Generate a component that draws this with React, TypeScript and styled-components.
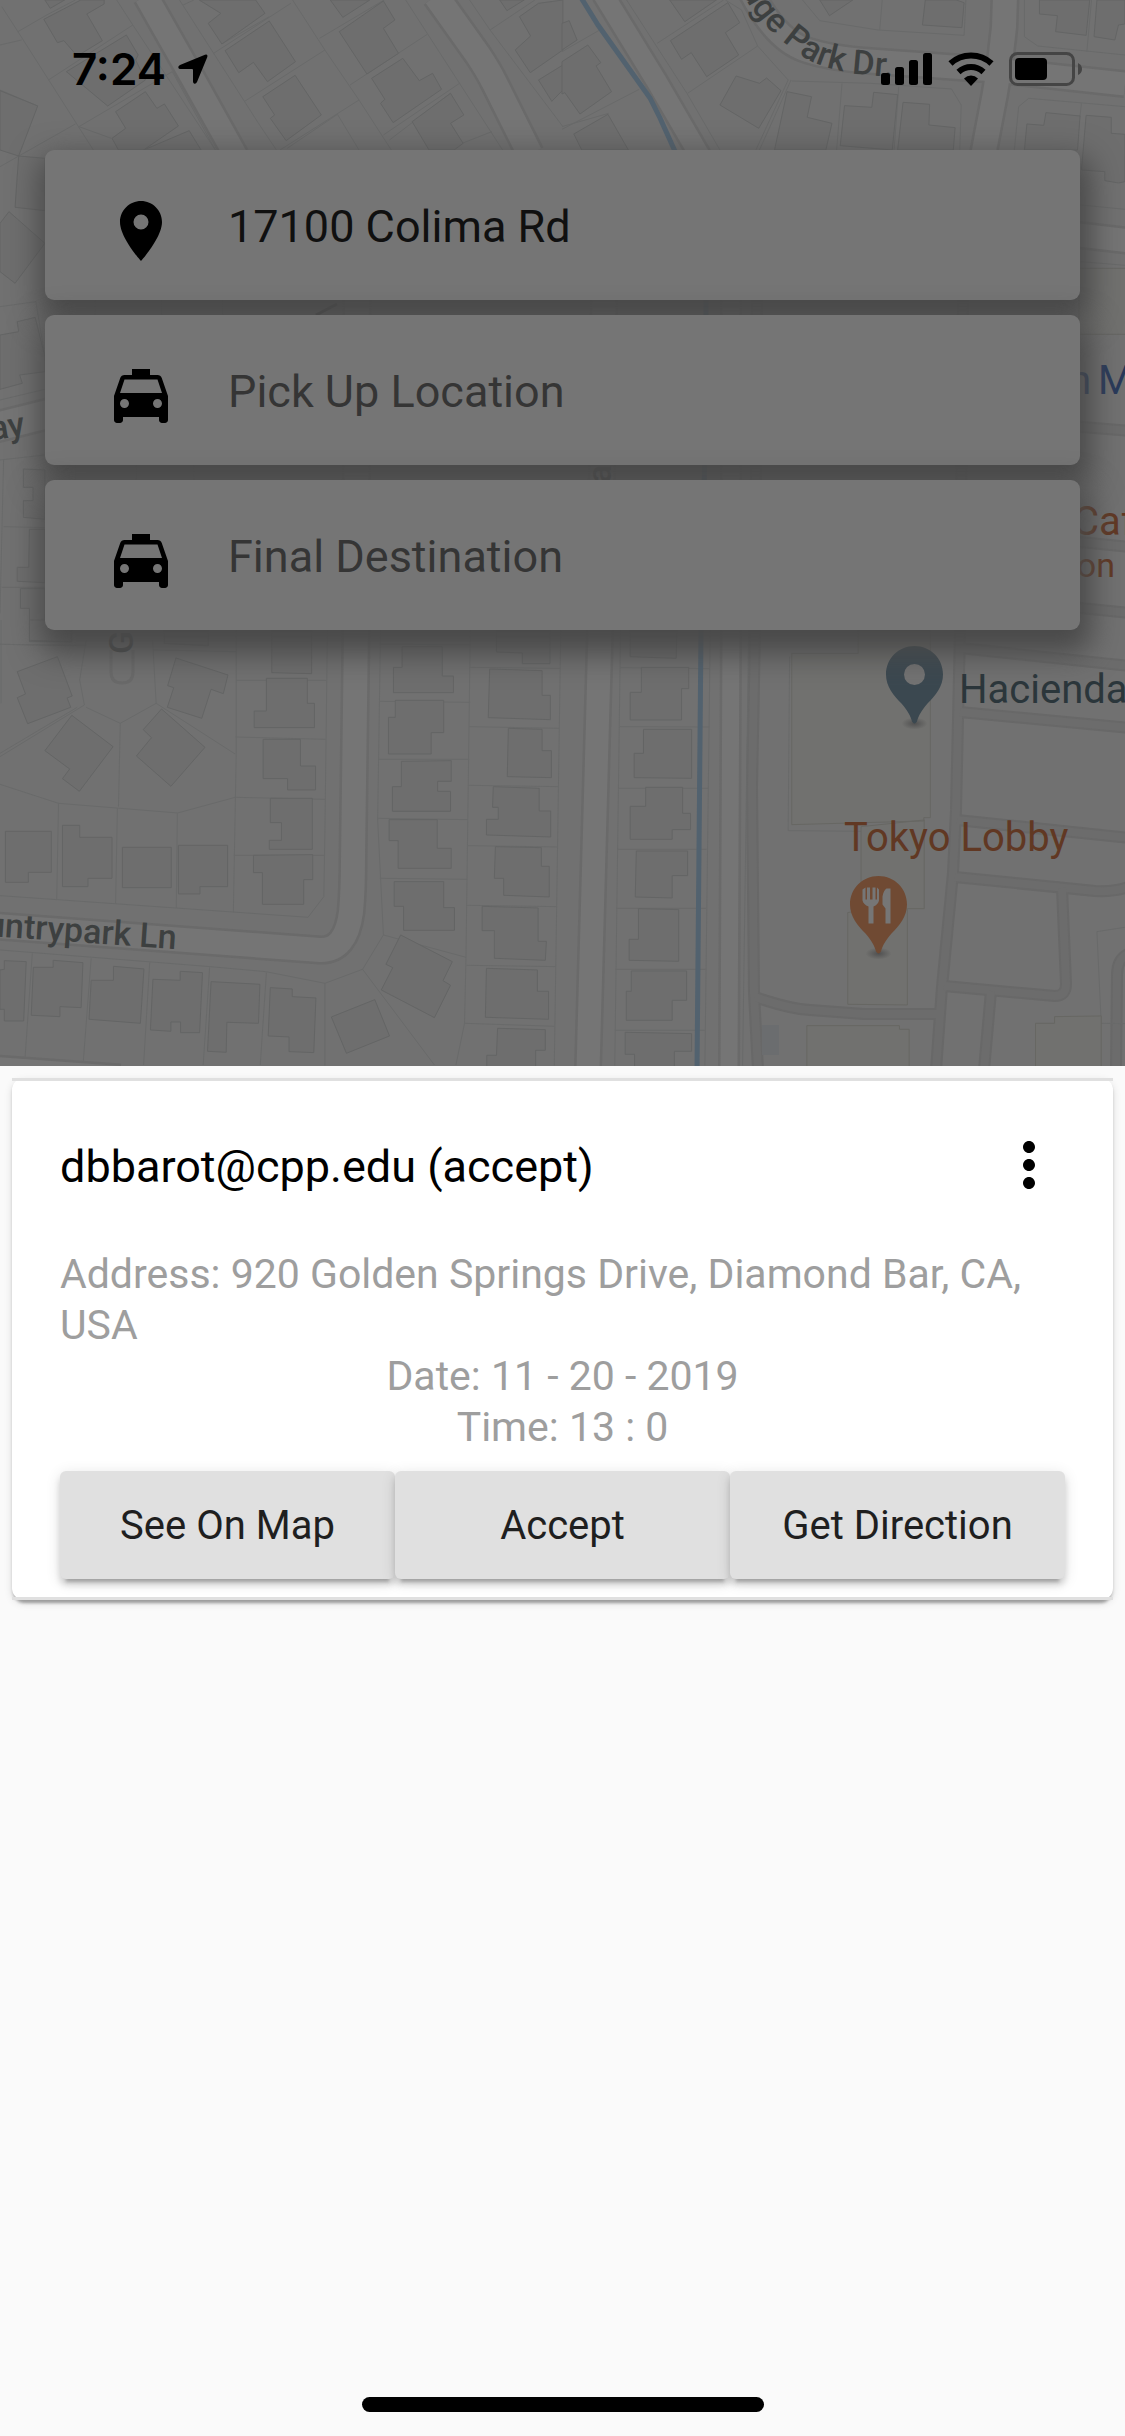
import React from 'react';
import styled, { createGlobalStyle } from 'styled-components';
import { MdLocalTaxi, MdMoreVert, MdPlace } from 'react-icons/md';
import type { IconType } from 'react-icons';

const font = 'Roboto, Inter, "Liberation Sans", sans-serif';
const clockFont = 'Inter, Roboto, "Liberation Sans", sans-serif';

const GlobalStyle = createGlobalStyle`
  *, *::before, *::after { box-sizing: border-box; }
  body { margin: 0; background: #fafafa; font-family: ${font}; }
`;

const Page = styled.div`
  min-height: 100vh;
  display: flex;
  flex-direction: column;
  background: #fafafa;
`;

const MapHeader = styled.header`
  position: relative;
  height: 1066px;
  overflow: hidden;
  background: #717171;
`;

const MapSvg = styled.svg`
  position: absolute;
  inset: 0;
  width: 100%;
  height: 100%;
`;

const HeaderContent = styled.div`
  position: relative;
  display: flex;
  flex-direction: column;
`;

const StatusBar = styled.div`
  height: 138px;
  padding: 0 43px 0 72px;
  display: flex;
  align-items: center;
  justify-content: space-between;
  color: #000;
`;

const StatusGroup = styled.div<{ $gap: number }>`
  display: flex;
  align-items: center;
  gap: ${(p) => p.$gap}px;
`;

const Clock = styled.time`
  font-family: ${clockFont};
  font-size: 44px;
  line-height: 54px;
  font-weight: 600;
`;

const FieldStack = styled.form`
  display: flex;
  flex-direction: column;
  gap: 15px;
  padding: 12px 45px 0;
`;

const Field = styled.label`
  position: relative;
  height: 150px;
  display: flex;
  align-items: center;
  gap: 51px;
  padding: 0 60px;
  border-radius: 9px;
  background: #757575;
  box-shadow: 3px 15px 30px 9px #494949;
`;

const FieldIcon = styled.span`
  display: flex;
  padding-top: 12px;
  font-size: 72px;
  color: #000;
`;

const FieldInput = styled.input`
  flex: 1;
  min-width: 0;
  padding: 4px 0 0;
  border: 0;
  outline: 0;
  background: transparent;
  font-family: ${font};
  font-size: 45px;
  line-height: 60px;
  color: #101010;
  &::placeholder { color: #353535; opacity: 1; }
`;

const RequestList = styled.main`
  padding: 12px;
`;

const Card = styled.article`
  border-radius: 12px;
  background: #fff;
  box-shadow: 0 6px 3px -3px rgba(0, 0, 0, 0.2), 0 3px 3px rgba(0, 0, 0, 0.14), 0 3px 9px rgba(0, 0, 0, 0.12);
`;

const CardBody = styled.div`
  border: solid #e0e0e0;
  border-width: 3px 0;
  padding: 48px 48px 18px;
`;

const CardHead = styled.div`
  display: flex;
  align-items: center;
  justify-content: space-between;
  height: 72px;
`;

const CardTitle = styled.h2`
  margin: 0;
  padding-top: 4px;
  font-size: 45px;
  line-height: 60px;
  font-weight: 400;
  color: #000;
`;

const MenuButton = styled.button`
  display: flex;
  padding: 0;
  border: 0;
  background: transparent;
  font-size: 72px;
  color: #000;
`;

const Details = styled.div`
  display: flex;
  flex-direction: column;
  align-items: center;
  padding: 48px 0 18px;
`;

const DetailLine = styled.p`
  margin: 0;
  font-size: 41px;
  line-height: 51px;
  color: #9e9e9e;
`;

const Actions = styled.div`
  display: grid;
  grid-template-columns: repeat(3, 1fr);
`;

const ActionButton = styled.button`
  height: 108px;
  padding: 0;
  border: 0;
  border-radius: 6px;
  background: #e0e0e0;
  box-shadow: 0 9px 3px -6px rgba(0, 0, 0, 0.2), 0 6px 6px rgba(0, 0, 0, 0.14), 0 3px 15px rgba(0, 0, 0, 0.12);
  font-family: ${font};
  font-size: 40px;
  line-height: 51px;
  color: #1f1f1f;
`;

const HomeArea = styled.footer`
  margin-top: auto;
  padding-bottom: 24px;
  display: flex;
  justify-content: center;
`;

const HomeIndicator = styled.div`
  width: 402px;
  height: 15px;
  border-radius: 8px;
  background: #000;
`;

/* ---------- map ---------- */

type Line = string;

const cityRoads: { d: Line; w: number }[] = [
  { d: 'M146 -4 L192 77 L236 156', w: 25 },
  { d: 'M436 -4 L478 55 Q488 70 494 82 L530 154', w: 27 },
  { d: 'M603 -6 L657 82 L700 156', w: 22 },
  { d: 'M750 -10 Q775 40 806 50 Q830 58 870 61 L995 70 L1125 84', w: 25 },
  { d: 'M1005 -4 L1004 27 Q1001 60 995 93 L983 156', w: 26 },
  { d: 'M1070 234 L1130 241', w: 25 },
  { d: 'M-4 427 L60 411', w: 30 },
  { d: 'M-4 926 L320 950 Q346 951 351 912 Q353 890 353 860 L356 630 L357 300', w: 26 },
  { d: 'M604 300 L600 630 L588 1070', w: 25 },
  { d: 'M731 300 L731 630 L729 1070', w: 19 },
  { d: 'M-4 1070 L120 1079', w: 28 },
];

const driveways: Line[] = [
  'M757 300 L755 630 L752 787 L754 993 L758 1070',
  'M963 300 L960 630 L956 810 L953 873 L942 987 L936 1070',
  'M1070 426 L1130 431',
  'M1070 541 L1130 547',
  'M1070 607 L1130 613',
  'M960 648 L1130 666',
  'M960 712 L1130 728',
  'M957 820 L1130 838',
  'M955 877 L1095 891 Q1118 892 1130 886',
  'M1062 888 L1066 984 Q1066 996 1055 996 L944 986',
  'M991 991 L984 1070',
  'M755 997 Q790 1009 810 1010 L864 1014 L939 1014',
  'M1130 953 Q1117 958 1117 975 L1116 1070',
];

interface TileData { x: number; y: number; lots: Line; houses: Line; shops?: Line; }

/* Each tile keeps its own grid of 2.785 × 3 units to the pixel. */
const tiles: TileData[] = [
  {
    x: 0, y: 0,
    lots: 'M5 20L50 95L260 450 M50 95L130 45L210 0 M0 135L60 120 M325 0L370 75L600 450 M135 240L370 75 M220 380L480 215 M310 415L220 380 M0 270L105 318 M0 500L210 372 M480 215L600 450 M500 0L720 370L770 450 M510 15L540 0 M595 160L810 10 M620 130L750 50 M815 0L905 150L1000 300L1090 450 M680 305L905 150 M890 115L1070 0 M780 450L1000 300 M800 445L940 343L1000 450 M975 255L1190 103 M1130 0L1280 250L1400 450 M1068 405L1280 250 M1085 420L1255 280 M1308 0L1365 90L1568 380 M1365 90L1490 0 M1240 450L1370 395',
    houses: 'M125 0L140 25L180 0Z M290 0L290 12L242 42L285 122L215 168L178 122L160 128L122 58L225 0Z M185 215L352 105L385 165L378 180L405 240L300 318Z M312 415L350 385L322 335L405 275L437 325L458 312L497 378L400 450L330 450Z M400 450L527 392L560 450Z M555 0L615 40L580 70L618 132L738 40L712 0Z M627 152L750 63L823 185L745 245L706 187L665 218Z M732 290L822 226L895 345L797 422L753 355L765 345Z M920 0L955 52L1030 0Z M945 95L1068 3L1100 60L1068 85L1110 160L1022 222Z M1035 235L1122 175L1168 242L1205 220L1230 268L1095 368L1060 310L1072 298Z M1148 365L1255 280L1292 345L1255 370L1290 430L1265 450L1195 450Z M1392 0L1412 32L1460 0Z M1447 50L1500 10L1568 0L1568 150L1477 218L1435 150L1478 108Z M1500 240L1568 195L1568 270L1537 304Z M0 272L105 318L52 468L0 450Z M52 468L125 475L125 632L42 622Z M0 670L25 635L125 730L42 850L0 815Z',
  },
  {
    x: 562, y: 0,
    lots: 'M0 155L105 90 M0 388L215 268 M180 0L348 280L440 450 M265 130L450 0 M455 0L500 30L545 138L630 240L540 450 M350 280L545 138 M670 0L718 62L880 90L1120 106L1125 0 M885 90L892 0 M640 243L860 250L1085 267L1112 315L1108 450 M780 250L765 450 M938 260L925 450 M1288 0L1288 110L1325 138L1568 165 M1475 0L1462 155 M1260 450L1272 320L1300 295L1568 320 M1447 310L1432 450 M0 380L130 340 M638 240L550 450 M1445 615L1568 628 M1445 785L1568 796',
    houses: 'M0 70L20 62L42 120L0 150Z M0 185L72 135L108 188L95 198L138 275L50 342L8 278L0 282Z M33 402L128 343L185 450L55 450Z M300 0L342 65L430 0Z M302 122L462 8L495 68L455 98L492 165L403 230L360 158L333 178Z M440 315L485 228L550 250L570 234L610 272L548 385Z M592 450L627 275L695 290L683 352L752 370L735 450Z M718 0L745 47L810 0Z M1012 0L1004 75L1114 83L1120 8L1098 0Z M1330 0L1330 42L1380 47L1375 95L1460 106L1470 0Z M1490 0L1482 110L1540 120L1550 75L1568 72L1568 0Z M787 317L863 322L868 277L935 284L920 450L775 437Z M950 307L1024 313L1022 375L1095 383L1090 450L935 450Z M1295 372L1342 376L1348 338L1443 348L1436 450L1288 450Z M1460 346L1530 352L1530 400L1568 403L1568 545L1550 549L1512 542L1512 515L1447 510Z',
    shops: 'M1440 805H1572V1003H1440Z',
  },
  {
    x: 0, y: 300,
    lots: 'M0 20L100 5L125 170 M0 300L125 268 M0 480L125 465 M10 480L0 940 M10 680L125 683 M5 862L125 862 M0 1033L240 1038 M210 495V540 M380 495V540 M540 495V540 M620 0V45 M265 0V45 M450 0V45',
    houses: 'M48 65L98 52L125 170L125 215L55 225L62 250L0 268L0 105L52 95Z M65 507L125 510L125 658L65 652V602H92V562H65Z M82 688H125V848L48 844V802H80Z M57 866H125V990H200V1025H82V925H57Z M458 990H580V1038L458 1030Z',
  },
  {
    x: 0, y: 620,
    lots: 'M3 0V250 M0 73L240 76 M240 60L222 180L235 255L0 410 M240 262L335 310L435 250L655 402 M0 400L215 262 M335 310L330 560 M435 250L425 60 M427 90L658 95 M658 30V400L650 877 M0 493L163 550L495 579L655 532L905 538 M163 550L158 837 M327 565L322 850 M494 580L491 864 M658 181H908 M656 351L907 358 M651 706H903 M912 30L905 640L902 830L858 892L0 827 M0 990L585 1040L740 1055L905 1090L1010 1048L1210 1335 M90 1000L70 1310 M254 1015L232 1325 M417 1028L400 1335 M584 1042L566 1335 M742 1058L725 1335 M905 1090V1337 M1060 30L1052 600L1068 945L1010 1048 M1068 945L1298 1012 M1058 72L1310 75 M1058 244L1310 247 M1055 418H1307 M1052 595L1303 599 M1058 775L1302 778 M1310 30L1298 1012L1294 1210L1270 1335 M1308 142L1560 145 M1307 320L1557 325 M1306 496L1555 500 M1303 677L1552 681 M1300 856L1549 860 M1299 1036L1548 1040 M1294 1210L1544 1219 M1562 30L1544 1337',
    houses: 'M82 0H198V65L82 61Z M48 155L160 110L201 228L187 234L197 262L77 311L48 233L71 222Z M125 392L200 286L315 380L221 514L174 476L194 447Z M490 114L635 165L622 221L588 208L562 295L466 262L484 203L467 197Z M450 267L571 382L476 499L380 408L422 353L399 329Z M458 30H580V76L458 70Z M757 30H868V161L757 158Z M742 175H856V250H876V323H708V273H742Z M733 358H837V438H879V510H801V476H733Z M753 535H870V688H750V661H784V608H753Z M706 706L871 704V779H846V853H731V758H706Z M15 634H143V757H79V787H15Z M174 616H222V652H312V775H245V800H174Z M341 682H477V803H341Z M497 676H634V800H557V822H497Z M0 1050L12 1048V1022L73 1025L66 1203H12V1168H0Z M93 1042H148V1021L231 1028L226 1163L167 1160V1190L87 1186Z M254 1081H316V1039L401 1047L391 1210L248 1198Z M426 1078L502 1081V1054L564 1058L556 1238H503V1206H476V1234L419 1230Z M588 1085L724 1093L720 1210L632 1207L630 1297L578 1294Z M753 1103L814 1107V1130L880 1134L874 1298L805 1295V1251L747 1248Z M923 1191L1044 1139L1085 1248L965 1300Z M1116 945L1260 1025L1234 1082L1255 1096L1210 1193L1062 1110L1094 1043L1075 1033Z M1120 80H1232V168H1263V218H1096V142H1120Z M1101 241H1236V338H1201V402H1082V292H1101Z M1118 424L1257 422V484H1219V514H1255V574H1093V500H1118Z M1084 599H1218V685H1257V745H1109V662H1084Z M1098 785H1236V863H1266V931H1124V859H1098Z M1383 30H1532V131H1455V99L1383 96Z M1364 147L1510 152V226H1533V299L1360 293Z M1416 325L1510 328V392H1536V473L1413 470Z M1374 500L1502 505V573H1534V651L1355 645V598H1388V562H1372Z M1380 680L1508 683V739H1530V831L1403 826V775H1377Z M1343 859L1499 864V964H1522L1519 1021L1377 1015V932H1343Z M1355 1045L1497 1050V1114H1528V1198L1352 1192Z M1386 1225L1519 1229V1291H1492V1340H1356V1306H1383Z',
  },
  {
    x: 562, y: 620,
    lots: 'M163 30L147 1337 M413 30L398 1337 M163 143L412 146 M161 320L410 321 M158 505H407 M155 688H403 M152 865H401 M149 1048H399 M147 1231H398 M520 30L503 1337 M634 110L630 632L833 634 M1490 935L1568 922 M1490 935L1502 1210L1568 1211',
    houses: 'M190 30H320L318 115L190 110Z M221 142H353V206H333V300H190V217H221Z M227 328H361V475L201 473V400H227Z M233 502H336V580H358V629H307V658H190V559H233Z M207 693H350V767H307V834L204 831Z M213 866L325 869V1024L187 1021V958H213Z M193 1053H347V1141H307V1201H179V1114H193Z M176 1237L361 1241V1294H313V1340H202V1303H176Z',
    shops: 'M640 100H825V30H1026V593H1008V603L640 614Z M833 620L1009 600V866H962V1155L796 1153V878L833 870Z M682 1217H940V1228H967V1340H682Z M1319 1210H1372V1190L1502 1188V1340H1319Z',
  },
];

const Tile = ({ tile }: { tile: TileData }) => (
  <g transform={`translate(${tile.x} ${tile.y}) scale(0.359 0.3333)`}>
    <path d={tile.lots} fill="none" stroke="#696a6a" strokeWidth={1} vectorEffect="non-scaling-stroke" />
    <path d={tile.houses} fill="#6e6e6e" stroke="#646565" strokeWidth={1} vectorEffect="non-scaling-stroke" />
    {tile.shops && (
      <path d={tile.shops} fill="#71716f" stroke="#676763" strokeWidth={1} vectorEffect="non-scaling-stroke" />
    )}
  </g>
);

const pinShape =
  'M0 -28.5C16 -28.5 28.5 -16 28.5 0C28.5 12 21 21 13 29C7 36 4 41 2.5 47Q0 51 -2.5 47C-4 41 -7 36 -13 29C-21 21 -28.5 12 -28.5 0C-28.5 -16 -16 -28.5 0 -28.5Z';

const CityMap = () => (
  <MapSvg viewBox="0 0 1125 1066" preserveAspectRatio="xMinYMin slice" role="img" aria-label="Map">
    <defs>
      <path id="parkDrive" d="M735 -22 C751 14 768 30 791 48 C808 62 825 69 858 74 L923 80" />
      <radialGradient id="pinShadow">
        <stop offset="0" stopColor="#505050" />
        <stop offset="1" stopColor="#505050" stopOpacity="0" />
      </radialGradient>
    </defs>
    <rect width="1125" height="1066" fill="#717171" />
    <g fill="none" strokeLinejoin="round">
      {cityRoads.map((r) => <path key={r.d} d={r.d} stroke="#6a6a6a" strokeWidth={r.w + 3} />)}
      {cityRoads.map((r) => <path key={r.d} d={r.d} stroke="#757575" strokeWidth={r.w - 2} />)}
      {driveways.map((d) => <path key={d} d={d} stroke="#686868" strokeWidth={12} />)}
      {driveways.map((d) => <path key={d} d={d} stroke="#6c6c6c" strokeWidth={8} />)}
      <path d="M111 650 V672 Q111 683 122 683 Q133 683 133 672 V650" stroke="#6a6a6a" strokeWidth={3} />
    </g>
    {tiles.map((t) => <Tile key={`${t.x}-${t.y}`} tile={t} />)}
    <rect x="762" y="1025" width="17" height="30" fill="#6b6d6f" />
    <path d="M580 -4L598 25L650 98Q655 108 660 118L706 220V400L701 630L697 1070" fill="none" stroke="#52626f" strokeWidth={5} />

    <g fill="#3d4040" fontFamily={font} fontWeight={500} fontSize={34}>
      <text><textPath href="#parkDrive" startOffset="14">dge Park Dr.</textPath></text>
      <text transform="translate(176 949) rotate(4)" textAnchor="end">untrypark Ln</text>
      <text transform="translate(26 435) rotate(-9)" textAnchor="end">ay</text>
      <text transform="translate(133 654) rotate(-90)" fill="#444646">G</text>
      <text transform="translate(611 483) rotate(-90)" fill="#444646">at</text>
    </g>
    <path d="M316 315L337 304" stroke="#444646" strokeWidth={3} />

    <g fontFamily={font} fontSize={40}>
      <text x="1091" y="394" textAnchor="end" fill="#28395a">n</text>
      <text x="1098" y="394" fill="#28395a">M</text>
      <text x="1073" y="535" fill="#613823">Caf</text>
      <text x="1115" y="577" fontSize={34} textAnchor="end" fill="#613823">on</text>
      <text x="959" y="703" fill="#2b363b">Hacienda</text>
      <text x="844" y="851" fill="#613823">Tokyo Lobby</text>
    </g>

    <g transform="translate(914.5 674.5)">
      <ellipse cy="49" rx="13" ry="6" fill="url(#pinShadow)" />
      <path d={pinShape} fill="#3b4850" />
      <circle r="10.5" fill="#737373" />
    </g>
    <g transform="translate(878.5 904.5)">
      <ellipse cy="49" rx="13" ry="6" fill="url(#pinShadow)" />
      <path d={pinShape} fill="#704a33" />
      <g fill="#767676">
        <path d="M-16 -15L-13 -17V-5H-11.500V-17H-8.500V-5H-6V-17H-3V-5H-1.500V-17L0.500 -15V-4Q-0.500 0 -5 2V19H-10V2Q-15 0 -16 -4Z" />
        <path d="M12 -16V19H7V4L4 0V-8Q5 -14 8 -16Z" />
      </g>
    </g>
  </MapSvg>
);

/* ---------- status bar icons ---------- */

const LocationArrow = () => (
  <svg width="30" height="30" viewBox="0 0 30 30" aria-hidden="true">
    <path d="M28.500 0.500Q30 1 29.300 3L19 28Q18 30 16.500 29.700Q15 29.500 15 27.500V16Q15 15 14 15H2.500Q0.500 15 0.300 13.500Q0 12 2 11L27 0.700Q28 0.200 28.500 0.500Z" />
  </svg>
);

const SignalBars = () => (
  <svg width="52" height="34" viewBox="0 0 52 34" aria-hidden="true">
    <rect x="0" y="21" width="9" height="12" rx="2.500" />
    <rect x="14" y="15" width="9" height="18" rx="2.500" />
    <rect x="28" y="8" width="9" height="25" rx="2.500" />
    <rect x="42" y="1" width="9" height="32" rx="2.500" />
  </svg>
);

const Wifi = () => (
  <svg width="46" height="34" viewBox="0 0 46 34" aria-hidden="true">
    <path d="M2.500 11.500Q11 3.500 23 3.500T43.500 11.500" fill="none" stroke="#000" strokeWidth="6" />
    <path d="M10.500 20Q16 15 23 15T35.500 20" fill="none" stroke="#000" strokeWidth="6" />
    <path d="M16 26.500Q19 23.500 23 23.500T30 26.500L23 34Z" />
  </svg>
);

const Battery = () => (
  <svg width="73" height="34" viewBox="0 0 73 34" aria-hidden="true">
    <rect x="1.500" y="1.500" width="63" height="31" rx="7" fill="none" stroke="#454545" strokeWidth="3" />
    <rect x="6" y="6" width="32" height="22" rx="4" />
    <path d="M69 11Q73 13 73 17T69 23Z" fill="#454545" />
  </svg>
);

interface LocationFieldProps { icon: IconType; label: string; value?: string; }

const LocationField = ({ icon: Icon, label, value }: LocationFieldProps) => (
  <Field>
    <FieldIcon><Icon /></FieldIcon>
    <FieldInput type="text" aria-label={label} placeholder={label} defaultValue={value} />
  </Field>
);

export default function App() {
  return (
    <>
      <GlobalStyle />
      <Page>
        <MapHeader>
          <CityMap />
          <HeaderContent>
            <StatusBar>
              <StatusGroup $gap={12}>
                <Clock>7:24</Clock>
                <LocationArrow />
              </StatusGroup>
              <StatusGroup $gap={15}>
                <SignalBars />
                <Wifi />
                <Battery />
              </StatusGroup>
            </StatusBar>
            <FieldStack>
              <LocationField icon={MdPlace} label="Current Location" value="17100 Colima Rd" />
              <LocationField icon={MdLocalTaxi} label="Pick Up Location" />
              <LocationField icon={MdLocalTaxi} label="Final Destination" />
            </FieldStack>
          </HeaderContent>
        </MapHeader>

        <RequestList>
          <Card>
            <CardBody>
              <CardHead>
                <CardTitle>dbbarot@cpp.edu (accept)</CardTitle>
                <MenuButton type="button" aria-label="More options"><MdMoreVert /></MenuButton>
              </CardHead>
              <Details>
                <DetailLine>Address: 920 Golden Springs Drive, Diamond Bar, CA, USA</DetailLine>
                <DetailLine>Date: 11 - 20 - 2019</DetailLine>
                <DetailLine>Time: 13 : 0</DetailLine>
              </Details>
              <Actions>
                <ActionButton type="button">See On Map</ActionButton>
                <ActionButton type="button">Accept</ActionButton>
                <ActionButton type="button">Get Direction</ActionButton>
              </Actions>
            </CardBody>
          </Card>
        </RequestList>

        <HomeArea>
          <HomeIndicator />
        </HomeArea>
      </Page>
    </>
  );
}
